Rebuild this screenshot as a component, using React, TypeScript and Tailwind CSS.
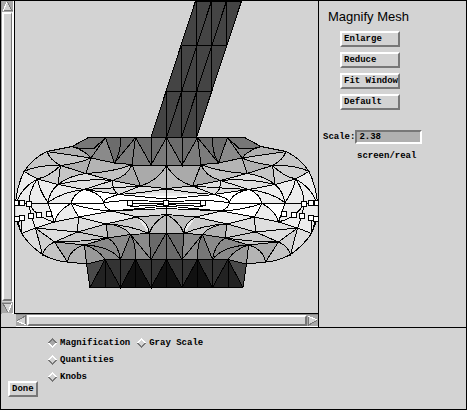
import React from "react";

type Shape = [string, string];

const fills: Shape[] = [
  ["#ececec", "M15.5 203L17 190L24 171.5L47 151.5L72 146.5L166.5 150V259.5L86.5 264L67.5 262L56 260L42.5 254.5L30 244L21.5 233.5L17 222Z"],
  ["#c6c6c6", "M24 171.5Q33 158 47 151.5L72 146.5L91 158L132 164.5L112.5 180.5L86 173.5L60 165.5Z"],
  ["#d0d0d0", "M24 171.5Q36 165 60.5 165.5L58 184.5L37.5 179Z"],
  ["#c6c6c6", "M60.5 165.5L86 173.5Q68 176 58 184.5Z"],
  ["#dedede", "M58 184.5Q68 176 86 173.5L112.5 180.5L84 189.5Z"],
  ["#b0b0b0", "M60.5 165.5Q80 163 91 158L86 173.5Z"],
  ["#b0b0b0", "M47 151.5L72 146.5Q86 151 91 158Z"],
  ["#b4b4b4", "M91 158L114.5 163L132 164.5Q112 172 86 173.5Z"],
  ["#c2c2c2", "M86 173.5Q114 172 132 164.5Q128 176 112.5 180.5Z"],
  ["#aaaaaa", "M132 164.5H166.5V188.5L140.5 186L112.5 180.5Q128 176 132 164.5Z"],
  ["#bababa", "M140.5 186Q157 181 166.5 166V188.5Z"],
  ["#dedede", "M84 189.5L112.5 180.5L140.5 186L166.5 188.5V193L119 194.5Z"],
  ["#8a8a8a", "M72 146.5L80 148.5H94L105.5 137.5L114.5 163L91 158Q86 151 72 146.5Z"],
  ["#6c6c6c", "M105.5 137.5H166.5V165H132L114.5 163Z"],
  ["#777777", "M72 146.5L88.5 137.5H105.5L94 148.5H80Z"],
  ["#7c7c7c", "M135.5 137.5L151 165L132 164.5L114.5 163Z"],
  ["#7a7a7a", "M166.5 137.5V165H151Z"],
  ["#ffffff", "M84 189.5L119 194.5L166.5 196V208L137 212L112 211L78.5 217L71 203.5Q73 194 84 189.5Z"],
  ["#ffffff", "M54.5 222L48 203H71Q57 211 54.5 222Z"],
  ["#ececec", "M78.5 217L112 211L137 217L106 224Z"],
  ["#dddddd", "M78.5 217L106 224L77.5 232Z"],
  ["#dddddd", "M112 211L166.5 208V214.5L137 217Z"],
  ["#cccccc", "M106 224L137 217L149 233.5L130.5 234.5Z"],
  ["#bcbcbc", "M137 217L166.5 214.5V232.5L149 233.5Q149 223 137 217Z"],
  ["#b0b0b0", "M106 224Q123 225 130.5 234.5L108 238Z"],
  ["#c8c8c8", "M54.5 242L77.5 232L106 224L108 238L84.5 245Z"],
  ["#dedede", "M35.5 228L54.5 222L78.5 217L77.5 232L54.5 242Z"],
  ["#dedede", "M21.5 233.5L35.5 228L42.5 254.5Q30 246 21.5 233.5Z"],
  ["#d0d0d0", "M35.5 228L54.5 242Q45 246 42.5 254.5Z"],
  ["#c4c4c4", "M54.5 242L67.5 262Q54 261 42.5 254.5Q45 246 54.5 242Z"],
  ["#aaaaaa", "M54.5 242L84.5 245Q70 249 67.5 262Z"],
  ["#b4b4b4", "M67.5 262Q70 249 84.5 245L86.5 264Z"],
  ["#8a8a8a", "M84.5 245L108 238L130.5 234.5L149 233.5L151 259.5H105L86.5 264Z"],
  ["#777777", "M130.5 234.5Q135 243 135.5 260H120.5Z"],
  ["#999999", "M84.5 245Q98 249 105 259.5L86.5 264Z"],
  ["#6a6a6a", "M149 233.5H166.5V260H151Z"],
  ["#4a4a4a", "M86.5 264L105 259.5L90 287.5Z"],
  ["#333333", "M105 259.5H166.5V287.5H90Z"],
  ["#222222", "M90 287.5L105 259.5L120.5 287.5Z"],
  ["#111111", "M120.5 287.5L135.5 259.5L151 287.5ZM151 287.5L166.5 259.5V287.5Z"],
];

const edges =
  // outline
  "M15.5 203Q17 186 24 171.5Q33 158 47 151.5L72 146.5L88.5 137.5H166.5" +
  "M17 222L21.5 233.5Q30 246 42.5 254.5Q54 261 67.5 262L86.5 264L90 287.5H166.5" +
  // collar
  "M72 146.5L80 148.5H94L105.5 137.5L91 158Q86 151 72 146.5M105.5 137.5L114.5 163L91 158M114.5 163Q121 153 120.5 137.5M114.5 163L135.5 137.5L132 164.5L114.5 163M135.5 137.5L151 165H132M151 137.5V165L166.5 137.5M151 165H166.5" +
  // shoulder
  "M91 158L47 151.5Q50 160 60.5 165.5Q80 163 91 158L86 173.5L60.5 165.5Q36 165 24 171.5L37.5 179L58 184.5L60.5 165.5Q50 176 37.5 179" +
  "M58 184.5Q68 176 86 173.5L112.5 180.5Q128 176 132 164.5Q114 172 86 173.5M132 164.5L140.5 186L112.5 180.5L84 189.5L58 184.5Q84 178 112.5 180.5M140.5 186Q157 181 166.5 166M140.5 186L166.5 188.5M84 189.5Q114 188 140.5 186L119 194.5L84 189.5M112.5 180.5Q112 191 119 194.5Q143 193 166.5 189" +
  // waist
  "M37.5 179Q22 187 16 203M37.5 179Q29 190 29 204M37.5 179Q40 192 48 202.5Q50 191 58 184.5M48 202.5Q62 192 84 189.5Q73 194 71 203.5L78.5 217M84 189.5Q101 193 103.5 202.5" +
  "M16 203H103.5M119 194.5Q104 198 103.5 202.5Q104 208 112 211M119 194.5L166.5 199M103.5 202.5L130 200L166.5 202M130 203.5H166.5M130 206.5L166.5 204.5M112 211L166.5 206M71 203.5Q90 210 112 211L78.5 217M112 211L137 217L166.5 214.5M112 211L166.5 208.5" +
  "M29 204L31 216L35.5 228L54.5 222L48 203M71 203.5Q57 211 54.5 222M17 219L21.5 233.5L35.5 228M22 218L21.5 233.5" +
  // underside
  "M29 204Q37 218 54.5 222L78.5 217L106 224L137 217Q149 223 149 233.5Q154 221 166.5 214.5M78.5 217L77.5 232L106 224M77.5 232L35.5 228L42.5 254.5Q45 246 54.5 242L35.5 228M54.5 242L77.5 232L108 238Q80 242 54.5 242L84.5 245L108 238L106 224Q129 225 149 233.5H166.5" +
  "M106 224Q123 225 130.5 234.5L149 233.5L151 259.5M108 238L130.5 234.5M54.5 242L67.5 262Q70 249 84.5 245L86.5 264L105 259.5H166.5M84.5 245Q98 249 105 259.5M84.5 245Q110 246 120.5 259.5Q118 244 108 238M130.5 234.5L120.5 259.5M130.5 234.5Q136 243 135.5 260M130.5 234.5L151 259.5L166.5 232.5" +
  // base
  "M90 287.5L105 259.5V287.5M105 259.5L120.5 287.5V259.5M120.5 287.5L135.5 259.5V287.5M135.5 259.5L151 287.5V259.5M151 287.5L166.5 259.5M166.5 137.5V287.5";

const handles = [
  [16, 203], [22, 203], [29, 204], [17, 219], [22, 218], [31, 216], [39, 215], [49, 214], [130, 203],
];

function HalfBody() {
  return (
    <g>
      {fills.map(([color, d]) => (
        <path key={d} d={d} fill={color} />
      ))}
      <path d={edges} fill="none" stroke="#000" />
    </g>
  );
}

function Mesh() {
  return (
    <svg viewBox="15 1 303 312" className="block w-full" shapeRendering="crispEdges" role="img" aria-label="Mesh">
      <path d="M195.5 1L151 137.5H196.5L241.5 1Z" fill="#444" stroke="#000" />
      <path
        d="M181.5 45.5H226.5M166.5 91.5H211.5M196.5 1V137.5M211.5 1V91.5M226.5 1V45.5M181.5 45.5V137.5M166.5 91.5V137.5M211.5 1L166.5 137.5M226.5 1L181.5 137.5"
        stroke="#000"
        fill="none"
      />
      <HalfBody />
      <g transform="translate(333 0) scale(-1 1)">
        <HalfBody />
      </g>
      {[...handles, [166, 203], ...handles.map(([x, y]) => [333 - x, y])].map(([x, y]) => (
        <rect key={`${x}-${y}`} x={x - 2.5} y={y - 2.5} width="5" height="5" fill="#fff" stroke="#000" />
      ))}
    </svg>
  );
}

function Arrow({ turn }: { turn: string }) {
  return (
    <svg viewBox="0 0 11 11" className={`block size-[11px] ${turn}`} shapeRendering="crispEdges">
      <rect width="11" height="11" fill="#a8a8a8" />
      <path d="M5 1L10 10H1Z" fill="#d3d3d3" />
      <path d="M5.5 1L10 9.5H1" fill="none" stroke="#777" />
      <path d="M5 1L1 10" stroke="#fff" />
    </svg>
  );
}

function PushButton({ children, className = "" }: { children: string; className?: string }) {
  return (
    <button
      type="button"
      className={`h-4 border-2 border-t-white border-l-white border-r-[#777] border-b-[#777] px-[2px] text-left leading-3 whitespace-nowrap ${className}`}
    >
      {children}
    </button>
  );
}

function Choice({ label, checked }: { label: string; checked?: boolean }) {
  return (
    <label className="flex h-[17px] items-center gap-[3px]">
      <input type="radio" name="panel" defaultChecked={checked} className="peer sr-only" />
      <svg
        viewBox="0 0 10 10"
        className="size-[10px] fill-[#d3d3d3] peer-checked:fill-[#a8a8a8]"
        shapeRendering="crispEdges"
      >
        <path d="M0 5L5 0L10 5Z" fill={checked ? "#777" : "#fff"} />
        <path d="M0 5L5 10L10 5Z" fill={checked ? "#fff" : "#777"} />
        <path d="M2 5L5 2L8 5L5 8Z" />
      </svg>
      {label}
    </label>
  );
}

export default function App() {
  return (
    <div className="flex min-h-screen w-full flex-col border border-black bg-[#d3d3d3] font-['Liberation_Mono',monospace] text-[9px] leading-3 font-bold text-black">
      <main className="flex border-b border-black">
        <div className="flex min-w-0 flex-1 flex-col">
          <div className="flex">
            <div className="flex w-[13px] shrink-0 flex-col border-r-2 border-white border-l border-l-[#999]">
              <button type="button" aria-label="Scroll up" className="h-[11px]">
                <Arrow turn="" />
              </button>
              <div className="w-[10px] flex-1 border-2 border-r border-white border-r-[#777] border-b-[#777]" />
              <button type="button" aria-label="Scroll down" className="h-[13px]">
                <Arrow turn="rotate-180" />
              </button>
            </div>
            <div className="min-w-0 flex-1 border-b border-l border-black">
              <Mesh />
            </div>
          </div>
          <div className="ml-[15px] flex h-[13px] items-center border-t border-b border-t-[#888] border-b-white">
            <button type="button" aria-label="Scroll left">
              <Arrow turn="-rotate-90" />
            </button>
            <div className="h-[11px] flex-1 border-2 border-white border-r-[#777] border-b-[#777]" />
            <button type="button" aria-label="Scroll right">
              <Arrow turn="rotate-90" />
            </button>
          </div>
        </div>
        <section className="w-[148px] shrink-0 border-l border-black pt-2">
          <h1 className="pl-[9px] font-['Liberation_Sans',sans-serif] text-[13px] leading-4 font-normal">Magnify Mesh</h1>
          <div className="mt-[6px] ml-[21px] flex w-[60px] flex-col gap-[5px]">
            <PushButton>Enlarge</PushButton>
            <PushButton>Reduce</PushButton>
            <PushButton>Fit Window</PushButton>
            <PushButton>Default</PushButton>
          </div>
          <div className="mt-5 ml-1 flex items-center">
            <label htmlFor="scale">Scale:</label>
            <input
              id="scale"
              defaultValue="2.38"
              className="h-[14px] w-[67px] border-2 border-t-[#777] border-l-[#777] border-r-white border-b-white bg-[#b0b0b0] px-[2px]"
            />
          </div>
          <p className="mt-[6px] ml-[38px]">screen/real</p>
        </section>
      </main>
      <footer className="flex-1 px-[46px] pt-[6px]">
        <div className="-mb-1 grid w-max grid-cols-[auto_auto] gap-x-[6px]">
          <Choice label="Magnification" checked />
          <Choice label="Gray Scale" />
          <div className="col-span-2">
            <Choice label="Quantities" />
          </div>
          <div className="col-span-2">
            <Choice label="Knobs" />
          </div>
        </div>
        <PushButton className="-ml-[39px]">Done</PushButton>
      </footer>
    </div>
  );
}
